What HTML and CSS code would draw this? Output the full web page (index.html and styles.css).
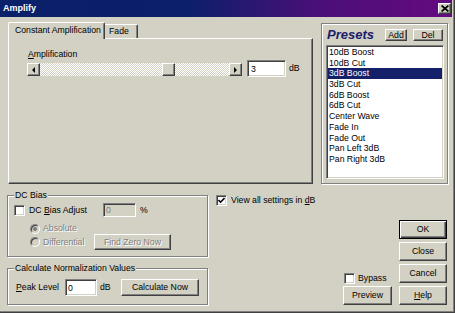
FILE: index.html
```html
<!DOCTYPE html>
<html>
<head>
<meta charset="utf-8">
<title>Amplify</title>
<link rel="stylesheet" href="styles.css">
</head>
<body>
<div class="window">
  <div class="titlebar">
    <span class="title">Amplify</span>
    <span class="close-btn"><svg width="8" height="7" viewBox="0 0 8 7"><path d="M0.6 0.5 L7.4 6.5 M7.4 0.5 L0.6 6.5" stroke="#000" stroke-width="1.7" fill="none"/></svg></span>
  </div>

  <div class="top">
    <div class="tabctl">
      <div class="tabstrip">
        <div class="tab active">Constant Amplification</div>
        <div class="tab fade">Fade</div>
      </div>
      <div class="tabpanel">
        <div class="amp-label"><u>A</u>mplification</div>
        <div class="amp-row">
          <div class="hscroll">
            <span class="sbtn"><span class="arrow-left"></span></span>
            <span class="track"><span class="thumb" style="margin-left:122px"></span></span>
            <span class="sbtn"><span class="arrow-right"></span></span>
          </div>
          <span class="edit amp-edit">3</span>
          <span class="unit">dB</span>
        </div>
      </div>
    </div>

    <div class="presets">
      <div class="presets-head">
        <span class="presets-title">Presets</span>
        <span class="btn small add">Add</span>
        <span class="btn small del">Del</span>
      </div>
      <ul class="listbox">
        <li>10dB Boost</li>
        <li>10dB Cut</li>
        <li class="selected">3dB Boost</li>
        <li>3dB Cut</li>
        <li>6dB Boost</li>
        <li>6dB Cut</li>
        <li>Center Wave</li>
        <li>Fade In</li>
        <li>Fade Out</li>
        <li>Pan Left 3dB</li>
        <li>Pan Right 3dB</li>
      </ul>
    </div>
  </div>

  <div class="bottom">
    <div class="left-col">
      <fieldset class="group dc">
        <legend>DC Bias</legend>
        <div class="row r1">
          <span class="check"></span>
          <span class="dc-lbl">DC <u>B</u>ias Adjust</span>
          <span class="edit disabled pct-edit">0</span>
          <span class="pct">%</span>
        </div>
        <div class="row r2">
          <span class="radio-opt"><span class="radio on"></span><span class="dis">Absolute</span></span>
        </div>
        <div class="row r3">
          <span class="radio-opt"><span class="radio"></span><span class="dis">Differential</span></span>
          <span class="btn dis-btn findzero">Find Zero Now</span>
        </div>
      </fieldset>
      <fieldset class="group norm">
        <legend>Calculate Normalization Values</legend>
        <div class="row r4">
          <span class="peak-lbl"><u>P</u>eak Level</span>
          <span class="edit peak-edit">0</span>
          <span class="peak-unit">dB</span>
          <span class="btn calc">Calculate Now</span>
        </div>
      </fieldset>
    </div>

    <div class="viewall">
      <span class="check"><svg width="7" height="7" viewBox="0 0 7 7"><path d="M0.5 3 L2.6 5.2 L6.5 1" stroke="#000" stroke-width="1.6" fill="none"/></svg></span>
      <span>View all settings in <u>d</u>B</span>
    </div>

    <div class="preview-col">
      <div class="bypass"><span class="check"></span><span>Bypass</span></div>
      <span class="btn preview">Preview</span>
    </div>

    <div class="btn-col">
      <span class="btn default">OK</span>
      <span class="btn">Close</span>
      <span class="btn">Cancel</span>
      <span class="btn"><u>H</u>elp</span>
    </div>
  </div>
</div>
</body>
</html>
```

FILE: styles.css
```css
* { box-sizing: border-box; }

body {
  margin: 0;
  font: 8.7px/11px "Liberation Sans", Arial, sans-serif;
  color: #000;
  background: #d2d1c3;
}

u { text-underline-offset: 1px; }

.window {
  width: 455px;
  height: 313px;
  background: #d2d1c3;
  border-right: 1px solid #404040;
  border-bottom: 1px solid #404040;
  box-shadow: inset -1px -1px #808080;
  padding: 0 2px 2px 0;
}

/* title bar */
.titlebar {
  height: 17px;
  display: flex;
  align-items: center;
  justify-content: space-between;
  padding: 0 1px 0 3px;
  background: linear-gradient(to right, #0a2068 0%, #0c1f6a 42%, #4a0f78 70%, #650a80 100%);
}
.title {
  color: #fff;
  font-weight: bold;
  font-size: 9px;
}
.close-btn {
  width: 13px;
  height: 11px;
  background: #d2d1c3;
  border: 1px solid;
  border-color: #fff #404040 #404040 #fff;
  box-shadow: inset -1px -1px #808080;
  display: flex;
  align-items: center;
  justify-content: center;
}

/* raised button */
.btn {
  display: flex;
  align-items: center;
  justify-content: center;
  height: 19px;
  background: #d2d1c3;
  border: 1px solid;
  border-color: #fff #404040 #404040 #fff;
  box-shadow: inset -1px -1px #808080;
  white-space: nowrap;
}
.btn.default {
  border-color: #000;
  box-shadow: inset 1px 1px #fff, inset -1px -1px #404040, inset -2px -2px #808080;
}
.dis, .dis-btn {
  color: #808080;
  text-shadow: 1px 1px #fff;
}

/* sunken edit */
.edit {
  display: block;
  background: #fff;
  border: 1px solid;
  border-color: #808080 #fff #fff #808080;
  box-shadow: inset 1px 1px #404040, inset -1px -1px #d2d1c3;
  padding: 2px 0 0 2px;
}
.edit.disabled {
  background: #d2d1c3;
  color: #808080;
}

/* checkbox */
.check {
  width: 11px;
  height: 11px;
  flex: none;
  background: #fff;
  border: 1px solid;
  border-color: #808080 #fff #fff #808080;
  box-shadow: inset 1px 1px #404040, inset -1px -1px #d2d1c3;
  display: flex;
  align-items: center;
  justify-content: center;
}

/* radio */
.radio {
  width: 10px;
  height: 10px;
  flex: none;
  border-radius: 50%;
  background: #d2d1c3;
  border: 1px solid;
  border-color: #808080 #fff #fff #808080;
  box-shadow: inset 1px 1px #404040;
}
.radio.on {
  background: radial-gradient(circle at 50% 50%, #808080 0 1.6px, #d2d1c3 2.2px);
}

/* top area */
.top {
  display: flex;
  height: 167px;
  padding: 5px 0 0 8px;
}
.tabctl {
  width: 305px;
  display: flex;
  flex-direction: column;
}
.tabstrip {
  display: flex;
  align-items: flex-end;
  height: 16px;
  position: relative;
  z-index: 1;
}
.tab {
  height: 14px;
  background: #d2d1c3;
  border: 1px solid;
  border-color: #fff #404040 transparent #fff;
  border-bottom: none;
  border-radius: 2px 2px 0 0;
  box-shadow: inset -1px 0 #808080;
  white-space: nowrap;
}
.tab.active {
  width: 97px;
  height: 17px;
  margin-bottom: -1px;
  padding: 2px 0 0 6px;
}
.tab.fade {
  width: 33px;
  border-left: none;
  border-top-left-radius: 0;
  padding: 1px 0 0 4px;
}
.tabpanel {
  height: 146px;
  border: 1px solid;
  border-color: #fff #404040 #404040 #fff;
  box-shadow: inset -1px -1px #808080;
  padding: 10px 0 0 18px;
}
.amp-label { margin-left: 1px; }
.amp-row {
  display: flex;
  align-items: flex-start;
  height: 17px;
}
.hscroll {
  display: flex;
  width: 215px;
  height: 13px;
  margin-top: 3px;
}
.sbtn, .thumb {
  width: 13px;
  height: 13px;
  flex: none;
  background: #d2d1c3;
  border: 1px solid;
  border-color: #fff #404040 #404040 #fff;
  box-shadow: inset -1px -1px #808080;
  display: flex;
  align-items: center;
  justify-content: center;
}
.track {
  flex: 1;
  display: flex;
  background: repeating-conic-gradient(#fff 0 25%, #d2d1c3 0 50%) 0 0 / 2px 2px;
}
.arrow-left {
  width: 0;
  height: 0;
  border-right: 3px solid #000;
  border-top: 3px solid transparent;
  border-bottom: 3px solid transparent;
  margin-left: -1px;
}
.arrow-right {
  width: 0;
  height: 0;
  border-left: 3px solid #000;
  border-top: 3px solid transparent;
  border-bottom: 3px solid transparent;
}
.amp-edit {
  width: 39px;
  height: 17px;
  margin-left: 5px;
  padding: 3px 0 0 3px;
}
.unit {
  margin-left: 3px;
  line-height: 17px;
}

/* presets */
.presets {
  width: 127px;
  height: 161px;
  margin: 1px 0 0 8px;
  border: 1px solid #808080;
  box-shadow: inset 1px 1px #fff, 1px 1px #fff;
  padding: 5px 3px 0 4px;
}
.presets-head {
  display: flex;
  align-items: center;
  height: 12px;
}
.presets-title {
  flex: 1;
  margin-left: 1px;
  font: italic bold 13px/12px "Liberation Sans", Arial, sans-serif;
  color: #1c1c6c;
}
.btn.small {
  height: 12px;
  line-height: 10px;
}
.btn.add { width: 22px; }
.btn.del { width: 30px; margin: 0 1px 0 6px; }
.listbox {
  list-style: none;
  margin: 4px 0 0;
  padding: 0;
  width: 118px;
  height: 134px;
  background: #fff;
  border: 1px solid;
  border-color: #808080 #fff #fff #808080;
  box-shadow: inset 1px 1px #404040, inset -1px -1px #d2d1c3;
  padding: 1px;
}
.listbox li {
  height: 10.7px;
  line-height: 10.7px;
  padding-left: 1px;
  white-space: nowrap;
}
.listbox li.selected {
  background: #14206a;
  color: #fff;
}

/* bottom area */
.bottom {
  display: flex;
  height: 126px;
  padding-left: 7px;
}
.left-col {
  width: 201px;
  flex: none;
  padding-top: 6px;
}
fieldset.group {
  margin: 0;
  padding: 0 6px;
  min-width: 0;
  border: 1px solid #808080;
  box-shadow: inset 1px 1px #fff, 1px 1px #fff;
}
fieldset.group legend {
  padding: 0 1px;
  line-height: 11px;
  background: #d2d1c3;
}
.group.dc { height: 67px; }
.group.norm { height: 42px; margin-top: 6px; }
.row {
  display: flex;
  align-items: center;
}
.r1 { height: 14px; margin-top: 2px; }
.dc-lbl { width: 74px; margin-left: 4px; }
.pct-edit { width: 33px; height: 14px; padding: 1px 0 0 2px; }
.pct { margin-left: 4px; }
.r2 { height: 11px; margin-top: 6px; padding-left: 16px; }
.r3 { height: 16px; padding-left: 16px; }
.radio-opt {
  display: flex;
  align-items: center;
  width: 64px;
  gap: 3px;
}
.findzero { width: 77px; height: 16px; }
.r4 { height: 17px; margin-top: 5px; }
.peak-lbl { width: 49px; margin-left: 2px; }
.peak-edit { width: 32px; height: 17px; padding: 3px 0 0 2px; }
.peak-unit { width: 21px; margin-left: 3px; }
.calc { width: 78px; height: 17px; }

.viewall {
  display: flex;
  align-items: center;
  gap: 4px;
  height: 11px;
  margin: 11px 0 0 8px;
  white-space: nowrap;
}
.preview-col {
  display: flex;
  flex-direction: column;
  width: 49px;
  margin: 0 7px 5px auto;
  align-self: flex-end;
}
.bypass {
  display: flex;
  align-items: center;
  gap: 3px;
  height: 11px;
  margin: 0 0 2px 1px;
}
.btn-col {
  display: flex;
  flex-direction: column;
  gap: 3px;
  width: 48px;
  margin: 0 5px 5px 0;
  align-self: flex-end;
}
```
